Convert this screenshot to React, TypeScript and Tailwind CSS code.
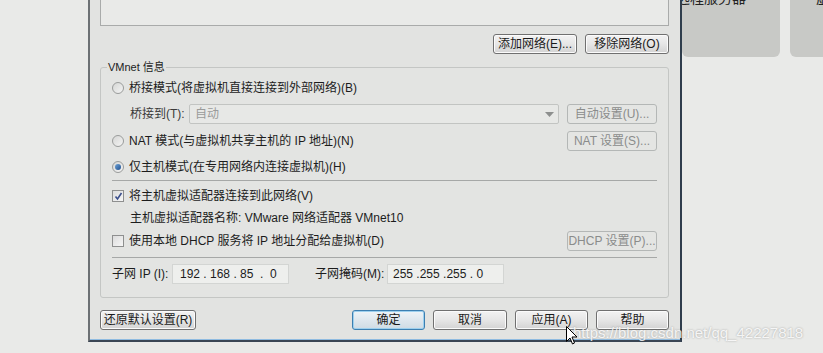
import React from 'react';

type BtnProps = {
  label: string;
  w: string;
  disabled?: boolean;
  primary?: boolean;
};

function Btn({ label, w, disabled, primary }: BtnProps) {
  if (disabled) {
    return (
      <div className={`${w} h-[20px] flex items-center justify-center rounded-[3px] border border-[#b4b7b6] bg-[#e4e5e3] text-[#8a8c8b] text-[12px] leading-[14px]`}>
        {label}
      </div>
    );
  }
  if (primary) {
    return (
      <div className={`${w} h-[20px] flex items-center justify-center rounded-[3px] border border-[#3c7fb1] bg-gradient-to-b from-[#eef4f8] to-[#cfdbe4] shadow-[inset_0_0_0_1px_#9dd0ee] text-[#1a1a1a] text-[12px] leading-[14px]`}>
        {label}
      </div>
    );
  }
  return (
    <div className={`${w} h-[20px] flex items-center justify-center rounded-[3px] border border-[#707070] bg-gradient-to-b from-[#f3f3f3] via-[#e6e6e6] to-[#d3d3d3] shadow-[inset_0_0_0_1px_#fbfbfb] text-[#1a1a1a] text-[12px] leading-[14px]`}>
      {label}
    </div>
  );
}

function Radio({ checked }: { checked?: boolean }) {
  return (
    <div className="w-[12px] h-[12px] rounded-full border border-[#9a9c9b] bg-gradient-to-br from-[#d6d7d5] to-[#f4f4f4] flex items-center justify-center shrink-0">
      {checked && <div className="w-[6px] h-[6px] rounded-full bg-gradient-to-br from-[#6fa3d6] to-[#1f4f8f]" />}
    </div>
  );
}

function Check({ checked }: { checked?: boolean }) {
  return (
    <div className="w-[12px] h-[12px] border border-[#8e8f8f] bg-gradient-to-br from-[#dcdcdc] to-[#f6f6f6] flex items-center justify-center shrink-0">
      {checked && (
        <svg width="9" height="9" viewBox="0 0 9 9">
          <path d="M1.5 4.5 L3.5 7 L7.5 1" fill="none" stroke="#3b4f8c" strokeWidth="1.6" />
        </svg>
      )}
    </div>
  );
}

export default function App() {
  return (
    <div className="relative w-[823px] h-[353px] overflow-hidden bg-[#e9eae8] flex font-['Liberation_Sans','Noto_Sans_CJK_SC',sans-serif] text-[#1c1c1c]">
      <div className="w-[88px] shrink-0" />

      {/* dialog */}
      <div className="w-[594px] h-[342px] shrink-0 bg-[#e2e3e1] border-l-2 border-r-2 border-b-2 border-l-[#6c7174] border-r-[#2f3d4c] border-b-[#3a4654] shadow-[inset_0_-1px_0_#8fbbe0] pl-[10px] pr-[11px] flex flex-col">
        <div className="h-[26px] border-x border-b border-[#a9abaa] bg-[#e9eae8]" />

        <div className="mt-[8px] flex justify-end gap-[8px]">
          <Btn label="添加网络(E)..." w="w-[84px]" />
          <Btn label="移除网络(O)" w="w-[84px]" />
        </div>

        {/* VMnet info group */}
        <div className="relative mt-[13px] h-[231px] rounded-[3px] border border-[#c4c6c4] bg-[#e3e4e2] px-[11px] flex flex-col text-[12px] leading-[14px]">
          <span className="absolute -top-[8px] left-[6px] px-[1px] bg-[#e2e3e1] text-[11px]">VMnet 信息</span>

          <div className="mt-[10px] h-[20px] flex items-center gap-[5px]">
            <Radio />
            <span>桥接模式(将虚拟机直接连接到外部网络)(B)</span>
          </div>

          <div className="mt-[6px] h-[20px] flex items-center">
            <span className="pl-[18px] w-[77px] shrink-0 text-[#3a3a3a]">桥接到(T):</span>
            <div className="w-[370px] h-[20px] border border-[#c2c4c2] rounded-[2px] bg-[#e7e8e6] flex items-center pl-[5px] pr-[4px] text-[#9a9b9a]">
              <span className="flex-1">自动</span>
              <svg width="9" height="5" viewBox="0 0 9 5">
                <path d="M0 0 L9 0 L4.5 5 Z" fill="#8d8f8e" />
              </svg>
            </div>
            <div className="ml-[8px]">
              <Btn label="自动设置(U)..." w="w-[90px]" disabled />
            </div>
          </div>

          <div className="mt-[7px] h-[20px] flex items-center gap-[5px]">
            <Radio />
            <span className="flex-1">NAT 模式(与虚拟机共享主机的 IP 地址)(N)</span>
            <Btn label="NAT 设置(S)..." w="w-[90px]" disabled />
          </div>

          <div className="mt-[6px] h-[20px] flex items-center gap-[5px]">
            <Radio checked />
            <span>仅主机模式(在专用网络内连接虚拟机)(H)</span>
          </div>

          <div className="mt-[3px] h-px bg-[#a6a8a7]" />

          <div className="mt-[5px] h-[20px] flex items-center gap-[5px]">
            <Check checked />
            <span>将主机虚拟适配器连接到此网络(V)</span>
          </div>

          <div className="mt-[2px] h-[20px] flex items-center pl-[18px]">
            <span>主机虚拟适配器名称: VMware 网络适配器 VMnet10</span>
          </div>

          <div className="mt-[3px] h-[20px] flex items-center gap-[5px]">
            <Check />
            <span className="flex-1">使用本地 DHCP 服务将 IP 地址分配给虚拟机(D)</span>
            <Btn label="DHCP 设置(P)..." w="w-[90px]" disabled />
          </div>

          <div className="mt-[6px] h-px bg-[#a6a8a7]" />

          <div className="mt-[6px] h-[20px] flex items-center">
            <span className="w-[60px] shrink-0">子网 IP (I):</span>
            <div className="w-[117px] h-[20px] border border-[#d3d5d3] bg-[#eeefed] flex items-center pl-[7px] whitespace-pre text-[12px]">
              192 . 168 . 85  .  0
            </div>
            <span className="ml-[26px] w-[72px] shrink-0">子网掩码(M):</span>
            <div className="w-[117px] h-[20px] border border-[#d3d5d3] bg-[#eeefed] flex items-center pl-[5px] whitespace-pre text-[12px]">
              255 .255 .255 . 0
            </div>
          </div>
        </div>

        <div className="mt-[12px] flex items-center">
          <Btn label="还原默认设置(R)" w="w-[96px]" />
          <div className="flex-1" />
          <div className="flex gap-[8px]">
            <Btn label="确定" w="w-[73px]" primary />
            <Btn label="取消" w="w-[74px]" />
            <Btn label="应用(A)" w="w-[73px]" />
            <Btn label="帮助" w="w-[73px]" />
          </div>
        </div>
      </div>

      {/* background cards on the right */}
      <div className="flex-1 flex gap-[10px] items-start overflow-hidden">
        <div className="w-[98px] h-[57px] shrink-0 bg-[#c8c9c6] rounded-b-[6px] overflow-hidden">
          <div className="-mt-[10px] -ml-[6px] text-[14px] leading-[16px] text-[#222]">远程服务器</div>
        </div>
        <div className="w-[98px] h-[57px] shrink-0 bg-[#c8c9c6] rounded-b-[6px] overflow-hidden">
          <div className="-mt-[10px] ml-[26px] text-[14px] leading-[16px] text-[#222]">虚拟机</div>
        </div>
      </div>

      {/* watermark */}
      <span className="absolute left-[573px] top-[324px] text-[15px] leading-[18px] font-['Liberation_Sans',sans-serif] text-white/85 [text-shadow:0_0_2px_rgba(60,60,60,0.45)]">
        https://blog.csdn.net/qq_42227818
      </span>

      {/* mouse cursor */}
      <svg className="absolute left-[566px] top-[326px]" width="12" height="19" viewBox="0 0 12 19">
        <path d="M0.5 0.5 L0.5 15.5 L4 12 L6.5 18 L8.5 17 L6 11 L11 11 Z" fill="#ffffff" stroke="#000000" strokeWidth="1" />
      </svg>
    </div>
  );
}
